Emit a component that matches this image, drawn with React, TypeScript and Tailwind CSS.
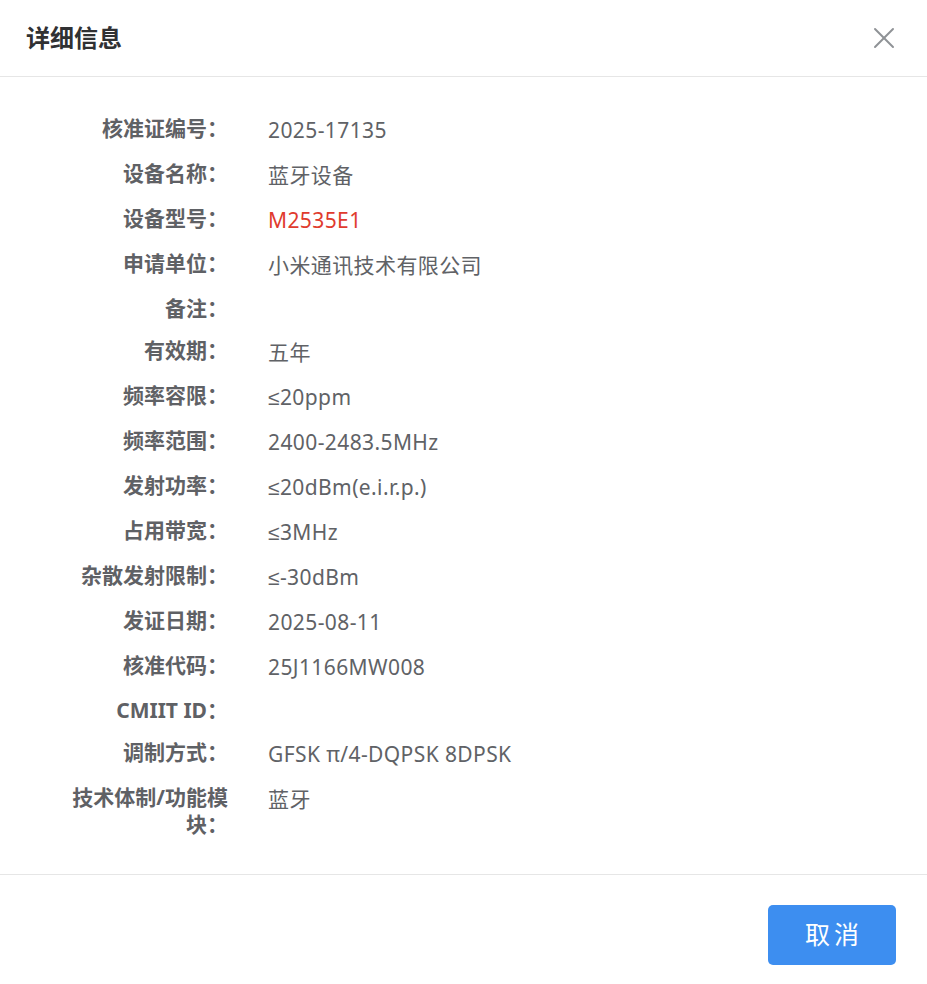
import { X } from 'lucide-react';

const rows: { label: string; value: string; red?: boolean }[] = [
  { label: '核准证编号', value: '2025-17135' },
  { label: '设备名称', value: '蓝牙设备' },
  { label: '设备型号', value: 'M2535E1', red: true },
  { label: '申请单位', value: '小米通讯技术有限公司' },
  { label: '备注', value: '' },
  { label: '有效期', value: '五年' },
  { label: '频率容限', value: '≤20ppm' },
  { label: '频率范围', value: '2400-2483.5MHz' },
  { label: '发射功率', value: '≤20dBm(e.i.r.p.)' },
  { label: '占用带宽', value: '≤3MHz' },
  { label: '杂散发射限制', value: '≤-30dBm' },
  { label: '发证日期', value: '2025-08-11' },
  { label: '核准代码', value: '25J1166MW008' },
  { label: 'CMIIT ID', value: '' },
  { label: '调制方式', value: 'GFSK π/4-DQPSK 8DPSK' },
  { label: '技术体制/功能模块', value: '蓝牙' },
];

export default function App() {
  return (
    <main
      className="h-[984px] w-full bg-white flex flex-col"
      style={{ fontFamily: '"Noto Sans", "Liberation Sans", "Noto Sans CJK SC", sans-serif' }}
    >
      <header className="h-[77px] shrink-0 flex items-center justify-between pl-[26px] pr-[25px] border-b border-[#e6e6e6]">
        <h1 className="text-[24px] font-bold text-[#303133]">详细信息</h1>
        <X className="w-[36px] h-[36px] text-[#8f9296]" strokeWidth={1.3} />
      </header>

      <div className="flex flex-col gap-[15px] pt-[38px] pb-[36px] border-b border-[#e6e6e6]">
        {rows.map((r) => (
          <div key={r.label} className="flex items-start text-[21px]">
            <div className="w-[160px] ml-[68px] shrink-0 text-right font-bold leading-[27px] text-[#5f6165]">
              {r.label}：
            </div>
            {r.value && (
              <div
                className={
                  'ml-[40px] leading-[30px] tracking-[0.4px] ' +
                  (r.red ? 'text-[#e03b2e]' : 'text-[#606266]')
                }
              >
                {r.value}
              </div>
            )}
          </div>
        ))}
      </div>

      <div className="flex justify-end pt-[30px] pr-[31px]">
        <button className="w-[128px] h-[60px] rounded-[5px] bg-[#3d8ef0] text-white text-[25px] tracking-[4px] pl-[4px]">
          取消
        </button>
      </div>
    </main>
  );
}
